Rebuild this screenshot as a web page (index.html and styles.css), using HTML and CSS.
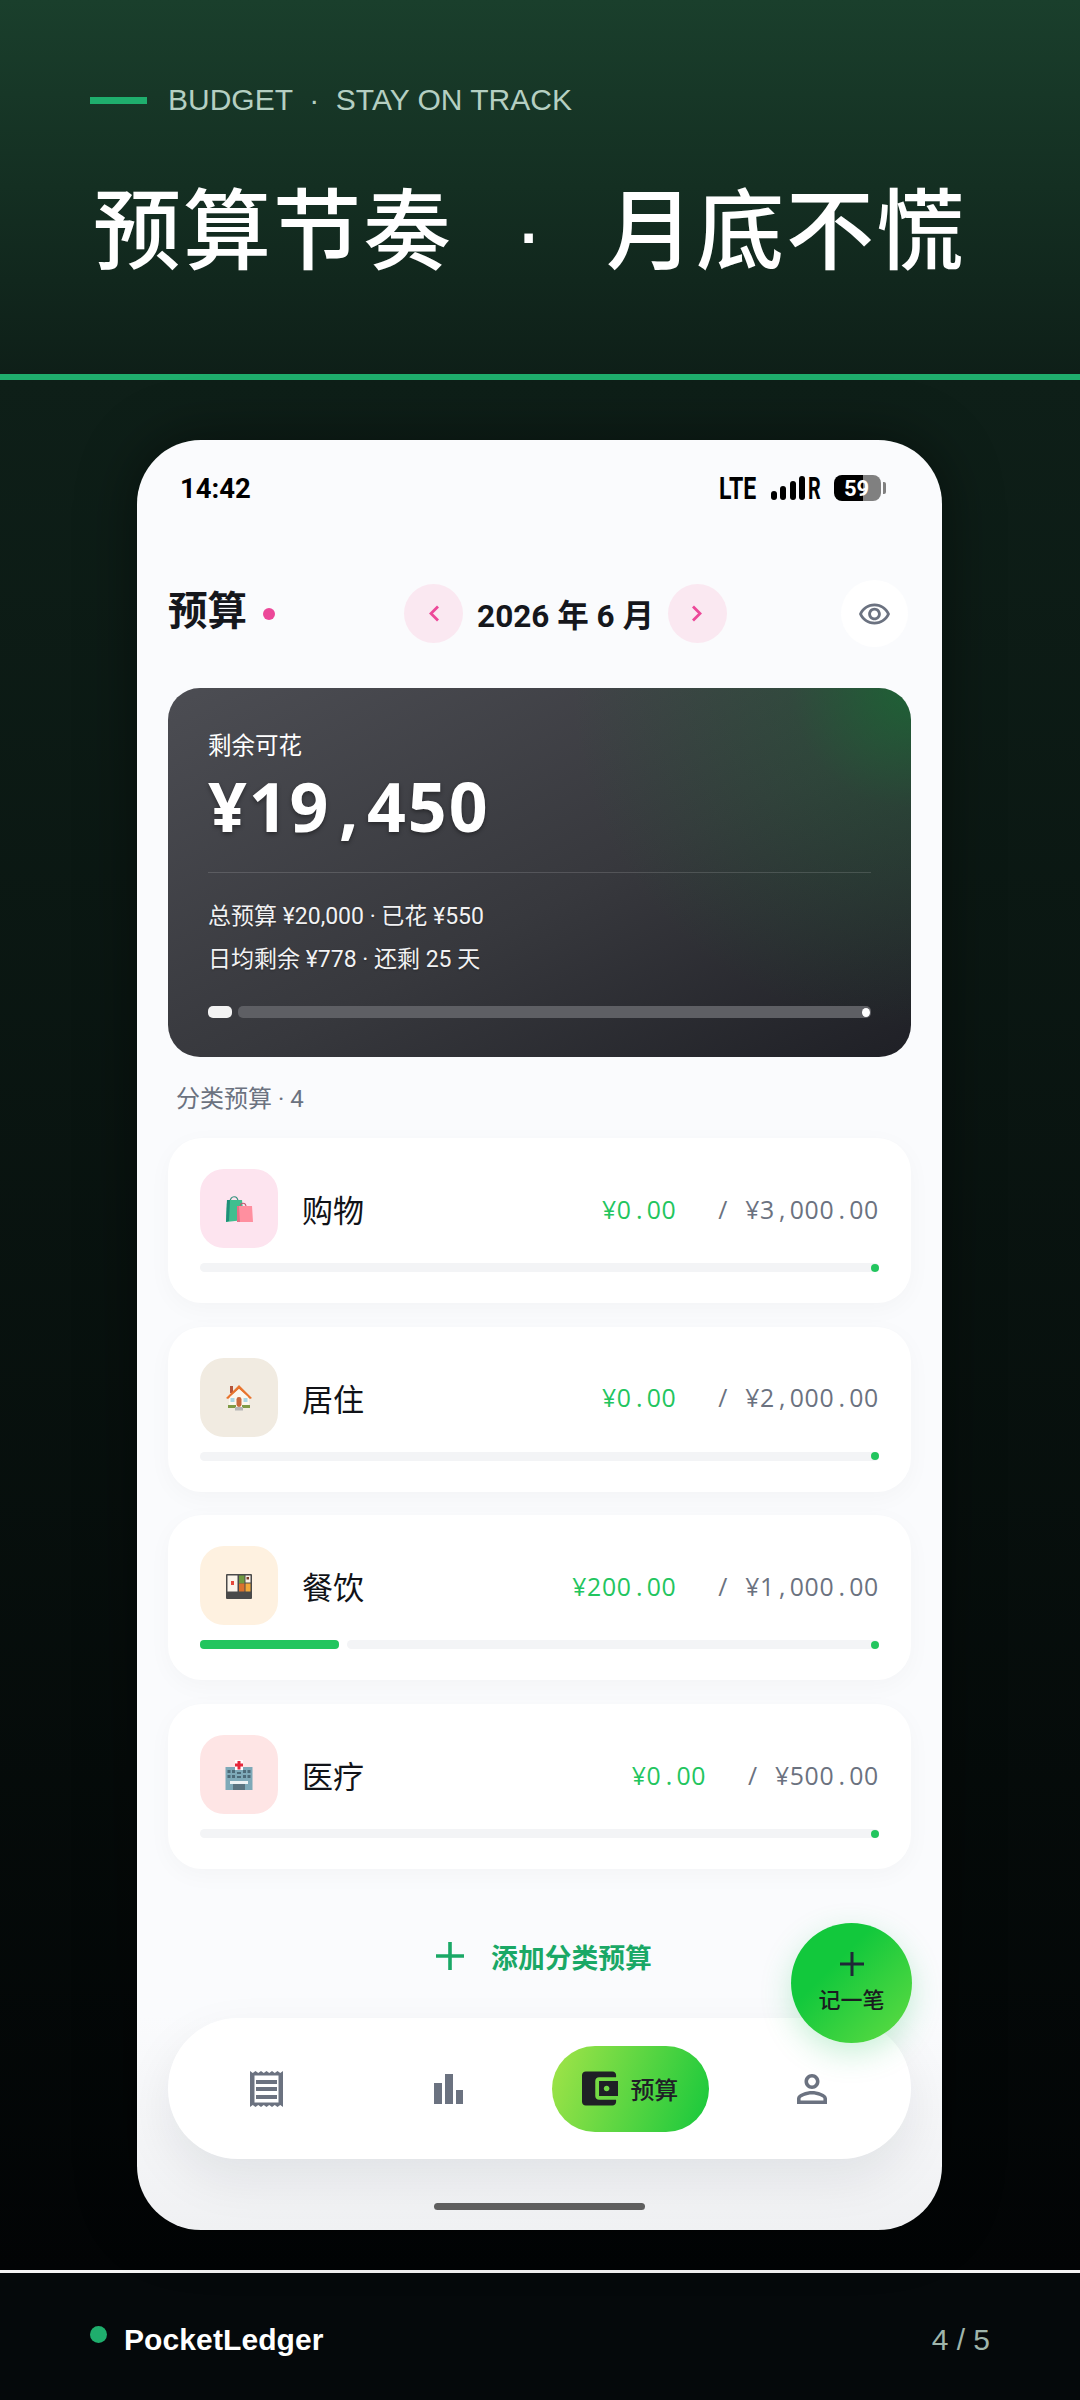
FILE: index.html
```html
<!DOCTYPE html>
<html lang="zh">

<head>
    <meta charset="utf-8">
    <title>PocketLedger</title>
    <link rel="stylesheet" href="styles.css">
</head>

<body>
    <!-- slide header -->
    <header class="banner">
        <div class="kicker"><span class="kicker-bar"></span><span>BUDGET &nbsp;·&nbsp; STAY ON TRACK</span></div>
        <h1 class="headline">预算节奏 &nbsp;·&nbsp; 月底不慌</h1>
    </header>

    <main class="stage">
        <div class="phone">
            <div class="status">
                <span class="clock">14:42</span>
                <div class="status-right">
                    <span class="lte">LTE</span>
                    <span class="signal"><i class="s1"></i><i class="s2"></i><i class="s3"></i><i class="s4"></i></span>
                    <span class="roam">R</span>
                    <span class="battery"><span class="battery-num">59</span></span>
                    <span class="battery-nub"></span>
                </div>
            </div>

            <div class="topbar">
                <div class="title-wrap"><span class="title">预算</span><span class="title-dot"></span></div>
                <div class="month-nav">
                    <span class="round-btn">
                        <svg width="12" height="17" viewBox="0 0 12 17"><polyline points="10,1.500 3,8.500 10,15.500" fill="none" stroke="#ec4899" stroke-width="2.800"/></svg>
                    </span>
                    <span class="month">2026 年 6 月</span>
                    <span class="round-btn">
                        <svg width="12" height="17" viewBox="0 0 12 17"><polyline points="2,1.500 9,8.500 2,15.500" fill="none" stroke="#ec4899" stroke-width="2.800"/></svg>
                    </span>
                </div>
                <span class="eye-btn">
                    <svg width="31" height="22" viewBox="1 4 22 15"><path fill="#6b7280" d="M12 6c3.79 0 7.17 2.13 8.82 5.5C19.17 14.87 15.79 17 12 17s-7.17-2.13-8.82-5.5C4.83 8.13 8.21 6 12 6m0-2C7 4 2.73 7.11 1 11.5 2.73 15.89 7 19 12 19s9.27-3.11 11-7.5C21.27 7.11 17 4 12 4zm0 5c1.38 0 2.5 1.12 2.5 2.5S13.38 14 12 14s-2.5-1.12-2.5-2.5S10.62 9 12 9m0-2c-2.48 0-4.5 2.02-4.5 4.5S9.52 16 12 16s4.5-2.02 4.5-4.5S14.48 7 12 7z"/></svg>
                </span>
            </div>

            <!-- summary card -->
            <section class="hero">
                <div class="hero-label">剩余可花</div>
                <div class="hero-amount mono">¥19<span class="p">,</span>450</div>
                <div class="hero-rule"></div>
                <div class="hero-line">总预算 ¥20,000 · 已花 ¥550</div>
                <div class="hero-line">日均剩余 ¥778 · 还剩 25 天</div>
                <div class="hero-bar">
                    <span class="hero-fill"></span>
                    <span class="hero-track"><i></i></span>
                </div>
            </section>

            <div class="section-label">分类预算 · 4</div>

            <div class="cat-list">
                <div class="cat">
                    <div class="cat-top">
                        <span class="cat-icon bg-pink">
                            <svg width="28" height="28" viewBox="0 0 28 28">
                                <path d="M5 7c0-7 8-7 8 0" fill="none" stroke="#2f8f7a" stroke-width="1.200"/>
                                <path d="M2 5h15l2 20-18 2z" fill="#3fbf8f"/>
                                <path d="M2 5h3l-1 21-3 1z" fill="#1f8f78"/>
                                <path d="M15 12c0-5 6-5 6 0" fill="none" stroke="#c2566f" stroke-width="1.200"/>
                                <path d="M12 11h15l1 16H12z" fill="#ff8f9f"/>
                                <path d="M12 11h2l1 16h-3z" fill="#e66f85"/>
                            </svg>
                        </span>
                        <span class="cat-name">购物</span>
                        <span class="spent mono">¥0<span class="p">.</span>00</span>
                        <span class="limit mono"><span class="p">/</span><span class="p"> </span>¥3<span class="p">,</span>000<span class="p">.</span>00</span>
                    </div>
                    <div class="cat-bar"><span class="cat-track"><i></i></span></div>
                </div>

                <div class="cat">
                    <div class="cat-top">
                        <span class="cat-icon bg-sand">
                            <svg width="28" height="28" viewBox="0 0 28 28">
                                <rect x="5" y="3" width="3" height="7" fill="#b5553a"/>
                                <rect x="4" y="12" width="20" height="12" fill="#fbf7ee"/>
                                <path d="M14 2 1 15l2 1L14 6l11 10 2-1z" fill="#e8742e"/>
                                <path d="M14 6 5 14v3h18v-3z" fill="#fbf7ee"/>
                                <rect x="11.500" y="14" width="5" height="10" rx="2.400" fill="#c9683c"/>
                                <rect x="5.500" y="15" width="4" height="4" fill="#a9d6e5"/>
                                <rect x="18.500" y="15" width="4" height="4" fill="#a9d6e5"/>
                                <rect x="3" y="22" width="8" height="3" fill="#7f9a45"/>
                                <rect x="17" y="22" width="8" height="3" fill="#7f9a45"/>
                                <rect x="10" y="24" width="8" height="3.500" fill="#b5b5b5"/>
                            </svg>
                        </span>
                        <span class="cat-name">居住</span>
                        <span class="spent mono">¥0<span class="p">.</span>00</span>
                        <span class="limit mono"><span class="p">/</span><span class="p"> </span>¥2<span class="p">,</span>000<span class="p">.</span>00</span>
                    </div>
                    <div class="cat-bar"><span class="cat-track"><i></i></span></div>
                </div>

                <div class="cat">
                    <div class="cat-top">
                        <span class="cat-icon bg-peach">
                            <svg width="28" height="28" viewBox="0 0 28 28">
                                <rect x="1" y="2" width="26" height="25" rx="1" fill="#4a4a4a"/>
                                <rect x="2.500" y="3.500" width="10" height="16" fill="#fbf4ea"/>
                                <rect x="6" y="9" width="3" height="4" fill="#e5483b"/>
                                <rect x="14" y="3.500" width="5.500" height="8" fill="#6f9a3f"/>
                                <rect x="14" y="11.500" width="5.500" height="8" fill="#d9722e"/>
                                <rect x="20.500" y="3.500" width="5" height="7" fill="#fbf4ea"/>
                                <rect x="21.500" y="5" width="2.500" height="2.500" fill="#7a3b2a"/>
                                <rect x="20.500" y="11.500" width="5" height="8" fill="#f2a93b"/>
                            </svg>
                        </span>
                        <span class="cat-name">餐饮</span>
                        <span class="spent mono">¥200<span class="p">.</span>00</span>
                        <span class="limit mono"><span class="p">/</span><span class="p"> </span>¥1<span class="p">,</span>000<span class="p">.</span>00</span>
                    </div>
                    <div class="cat-bar"><span class="cat-fill"></span><span class="cat-track"><i></i></span></div>
                </div>

                <div class="cat">
                    <div class="cat-top">
                        <span class="cat-icon bg-rose">
                            <svg width="28" height="30" viewBox="0 0 28 30">
                                <rect x="0.500" y="7" width="27" height="23" fill="#7ea9b8"/>
                                <rect x="10" y="0" width="8" height="10" fill="#fff"/>
                                <path d="M12.500 1h3v2.500h2.500v3h-2.500v3h-3v-3H10v-3h2.500z" fill="#e5283c"/>
                                <g fill="#4c6a78">
                                    <rect x="2.500" y="10" width="3" height="3"/><rect x="7" y="10" width="3" height="3"/><rect x="18" y="10" width="3" height="3"/><rect x="22.500" y="10" width="3" height="3"/>
                                    <rect x="2.500" y="15" width="3" height="3"/><rect x="7" y="15" width="3" height="3"/><rect x="18" y="15" width="3" height="3"/><rect x="22.500" y="15" width="3" height="3"/>
                                    <rect x="12" y="12" width="4" height="2"/><rect x="12" y="16" width="4" height="2"/>
                                </g>
                                <rect x="5" y="21" width="18" height="3" fill="#eef3f5"/>
                                <rect x="8" y="24" width="12" height="6" fill="#5b7480"/>
                            </svg>
                        </span>
                        <span class="cat-name">医疗</span>
                        <span class="spent mono">¥0<span class="p">.</span>00</span>
                        <span class="limit mono"><span class="p">/</span><span class="p"> </span>¥500<span class="p">.</span>00</span>
                    </div>
                    <div class="cat-bar"><span class="cat-track"><i></i></span></div>
                </div>
            </div>

            <div class="add-row">
                <svg width="28" height="28" viewBox="0 0 28 28"><path d="M14 0v28M0 14h28" stroke="#1aa866" stroke-width="3.600"/></svg>
                <span>添加分类预算</span>
            </div>

            <nav class="tabbar">
                <span class="tab">
                    <svg width="33" height="36" viewBox="0 0 33 36">
                        <path fill="#6b7280" d="M0 0l2.750 2 2.750-2 2.750 2 2.750-2 2.750 2 2.750-2 2.750 2 2.750-2 2.750 2 2.750-2 2.750 2 2.750-2v36l-2.750-2-2.750 2-2.750-2-2.750 2-2.750-2-2.750 2-2.750-2-2.750 2-2.750-2-2.750 2-2.750-2L0 36z"/>
                        <rect x="4.500" y="4.500" width="24" height="27" fill="#fff"/>
                        <path fill="#6b7280" d="M6 9h21v4H6zM6 16h21v4H6zM6 24h21v4H6z"/>
                    </svg>
                </span>
                <span class="tab">
                    <svg width="29" height="30" viewBox="0 0 29 30"><path fill="#6b7280" d="M0 9h8v21H0zM11 0h8v30h-8zM22 16h7v14h-7z"/></svg>
                </span>
                <span class="tab">
                    <span class="tab-active">
                        <svg width="36" height="35" viewBox="3 3 19 18"><path fill="#1f2026" d="M21 18v1c0 1.100-.9 2-2 2H5c-1.110 0-2-.9-2-2V5c0-1.100.89-2 2-2h14c1.100 0 2 .9 2 2v1h-9c-1.110 0-2 .9-2 2v8c0 1.100.89 2 2 2h9zm-9-2h10V8H12v8zm4-2.500c-.83 0-1.500-.67-1.500-1.500s.67-1.500 1.500-1.500 1.500.67 1.500 1.500-.67 1.500-1.500 1.500z"/></svg>
                        <span>预算</span>
                    </span>
                </span>
                <span class="tab">
                    <svg width="30" height="30" viewBox="4 4 16 16"><path fill="#6b7280" d="M12 5.900c1.160 0 2.100.94 2.100 2.100s-.94 2.100-2.100 2.100S9.900 9.160 9.900 8s.94-2.100 2.100-2.100m0 9c2.970 0 6.100 1.460 6.100 2.100v1.100H5.900V17c0-.64 3.130-2.100 6.100-2.100M12 4C9.790 4 8 5.790 8 8s1.790 4 4 4 4-1.790 4-4-1.790-4-4-4zm0 9c-2.670 0-8 1.340-8 4v3h16v-3c0-2.660-5.330-4-8-4z"/></svg>
                </span>
            </nav>

            <div class="home-bar"></div>

            <!-- floating add button -->
            <div class="fab">
                <svg width="24" height="24" viewBox="0 0 24 24"><path d="M12 0v24M0 12h24" stroke="#1f2937" stroke-width="3"/></svg>
                <span>记一笔</span>
            </div>
        </div>
    </main>

    <footer class="slide-foot">
        <div class="brand"><span class="brand-dot"></span><span>PocketLedger</span></div>
        <span class="pager">4 / 5</span>
    </footer>
</body>

</html>
```

FILE: styles.css
```css
* {
    box-sizing: border-box;
}

body {
    margin: 0;
    width: 1080px;
    height: 2400px;
    display: flex;
    flex-direction: column;
    overflow: hidden;
    font-family: "Roboto", "Noto Sans CJK SC", sans-serif;
    background: #05090b;
}

/* banner */
.banner {
    height: 380px;
    padding: 82px 90px 0;
    background: linear-gradient(180deg, #1a3f2c, #0e1f18);
    border-bottom: 6px solid #1fae6d;
}

.kicker {
    display: flex;
    align-items: center;
    gap: 21px;
    height: 36px;
    font-family: "Liberation Sans", sans-serif;
    font-size: 30px;
    color: #b5cfc2;
}

.kicker-bar {
    width: 57px;
    height: 7px;
    background: #1fae6d;
}

.headline {
    margin: 59px 0 0 3px;
    font-family: "Liberation Sans", "Noto Sans CJK SC", sans-serif;
    font-size: 88px;
    line-height: 110px;
    font-weight: 500;
    letter-spacing: 2px;
    word-spacing: 4px;
    white-space: pre;
    color: #fff;
}

/* phone */
.stage {
    flex: 1;
    padding: 60px 1px 0 0;
    display: flex;
    justify-content: center;
    align-items: flex-start;
    background: linear-gradient(180deg, #0e1f18, #020405);
}

.phone {
    position: relative;
    width: 805px;
    height: 1790px;
    padding: 0 31px;
    border-radius: 64px;
    background: linear-gradient(180deg, #fafbfd 88%, #f0f1f3 100%);
    box-shadow: 0 0 60px rgba(0, 0, 0, 0.45);
}

.status {
    height: 96px;
    padding: 0 25px 0 12px;
    display: flex;
    align-items: center;
    justify-content: space-between;
    color: #000;
}

.clock {
    font-size: 27.500px;
    font-weight: 700;
}

.status-right {
    display: flex;
    align-items: center;
    height: 30px;
}

.lte,
.roam {
    display: inline-block;
    font-size: 32px;
    line-height: 30px;
    font-weight: 700;
    transform-origin: left center;
    transform: scaleX(0.72);
}

.lte {
    width: 52px;
}

.roam {
    width: 14px;
    margin-left: 3px;
    transform: scaleX(0.62);
}

.signal {
    display: flex;
    align-items: flex-end;
    gap: 3.500px;
    height: 24px;
}

.signal i {
    width: 6px;
    border-radius: 3px;
    background: #000;
}

.s1 { height: 9px; }
.s2 { height: 14px; }
.s3 { height: 19px; }
.s4 { height: 24px; }

.battery {
    width: 47px;
    height: 26px;
    margin-left: 12px;
    display: flex;
    align-items: center;
    justify-content: center;
    border-radius: 8px;
    background: linear-gradient(90deg, #000 62%, #808080 62%);
    color: #fff;
}

.battery-num {
    font-size: 22px;
    font-weight: 700;
    margin-right: 2px;
}

.battery-nub {
    width: 3px;
    height: 12px;
    margin-left: 2px;
    border-radius: 0 2px 2px 0;
    background: #808080;
}

.topbar {
    margin-top: 44px;
    height: 67px;
    padding-right: 3px;
    display: flex;
    align-items: center;
    justify-content: space-between;
}

.title-wrap {
    width: 122px;
    display: flex;
    align-items: center;
    gap: 16px;
}

.title {
    font-size: 39.500px;
    line-height: 62px;
    padding-bottom: 4px;
    font-weight: 700;
    color: #15171c;
}

.title-dot {
    width: 12px;
    height: 12px;
    border-radius: 50%;
    background: #ec4899;
}

.month-nav {
    display: flex;
    align-items: center;
    gap: 14px;
}

.round-btn {
    width: 59px;
    height: 59px;
    display: flex;
    align-items: center;
    justify-content: center;
    border-radius: 50%;
    background: #fae8f1;
}

.month {
    font-size: 31.500px;
    padding-bottom: 2px;
    font-weight: 700;
    color: #15171c;
}

.eye-btn {
    width: 67px;
    height: 67px;
    display: flex;
    align-items: center;
    justify-content: center;
    border-radius: 50%;
    background: #fff;
}

/* hero card */
.hero {
    margin-top: 41px;
    height: 369px;
    padding: 41px 40px 0;
    border-radius: 32px;
    color: #fff;
    background:
        radial-gradient(circle at 100% 0, rgba(21, 110, 50, 0.75), rgba(21, 110, 50, 0.25) 120px, rgba(21, 110, 50, 0) 340px),
        linear-gradient(to bottom right, #4c4d53, #37383d 55%, #1f2026);
}

.hero-label {
    font-size: 23.500px;
    line-height: 34px;
}

.hero-amount {
    margin-top: 1px;
    font-size: 68px;
    line-height: 84px;
    font-weight: 700;
    letter-spacing: -2.600px;
    text-shadow: 0 2px 4px rgba(0, 0, 0, 0.4);
}

.hero-amount .p {
    width: 0.54em;
}

.hero-rule {
    height: 1px;
    margin: 24px 0 22px;
    background: rgba(255, 255, 255, 0.14);
}

.hero-line {
    font-size: 23px;
    line-height: 43px;
    color: #f2f2f3;
    text-shadow: 0 1px 2px rgba(0, 0, 0, 0.3);
}

.hero-bar {
    margin-top: 25px;
    display: flex;
    gap: 6px;
    height: 12px;
}

.hero-fill {
    width: 24px;
    border-radius: 5px;
    background: #f3f3f3;
}

.hero-track {
    flex: 1;
    display: flex;
    justify-content: flex-end;
    align-items: center;
    padding-right: 1px;
    border-radius: 5px;
    background: #5e5f64;
}

.hero-track i {
    width: 8px;
    height: 9px;
    border-radius: 50%;
    background: #fff;
}

.section-label {
    margin-top: 25px;
    padding-left: 8px;
    height: 34px;
    font-size: 24px;
    line-height: 34px;
    color: #6b7280;
}

/* category rows */
.cat-list {
    margin-top: 22px;
    display: flex;
    flex-direction: column;
    gap: 23.700px;
}

.cat {
    height: 165px;
    padding: 31px 32px;
    border-radius: 34px;
    background: #fff;
    box-shadow: 0 6px 24px rgba(17, 24, 39, 0.03);
}

.cat-top {
    display: flex;
    align-items: center;
    height: 79px;
}

.cat-icon {
    width: 78px;
    height: 79px;
    display: flex;
    align-items: center;
    justify-content: center;
    border-radius: 24px;
}

.bg-pink { background: #fde4ef; }
.bg-sand { background: #f1ebe1; }
.bg-peach { background: #fef1e0; }
.bg-rose { background: #fee5e5; }

.cat-name {
    margin-left: 24px;
    margin-right: auto;
    font-size: 31px;
    color: #111318;
}

.mono {
    font-family: "Open Sans", "Noto Sans CJK SC", sans-serif;
    letter-spacing: 0.028em;
    white-space: pre;
}

.p {
    display: inline-block;
    width: 0.6em;
    letter-spacing: 0;
    text-align: center;
}

.spent,
.limit {
    font-size: 24.800px;
}

.spent {
    color: #22c55e;
}

.limit {
    margin-left: 39px;
    color: #6b7280;
}

.cat-bar {
    margin-top: 15px;
    height: 9px;
    display: flex;
    gap: 8px;
}

.cat-fill {
    width: 139px;
    border-radius: 4px;
    background: #22c55e;
}

.cat-track {
    flex: 1;
    display: flex;
    justify-content: flex-end;
    align-items: center;
    border-radius: 5px;
    background: #f3f4f6;
}

.cat-track i {
    width: 8px;
    height: 8px;
    border-radius: 50%;
    background: #22c55e;
}

.add-row {
    margin-top: 57px;
    height: 60px;
    display: flex;
    align-items: center;
    justify-content: center;
    gap: 27px;
    padding-left: 9px;
    font-size: 26.800px;
    font-weight: 700;
    color: #1aa866;
}

/* bottom nav */
.tabbar {
    margin-top: 32px;
    height: 141px;
    padding: 0 8px;
    display: flex;
    align-items: center;
    border-radius: 70px;
    background: #fff;
    box-shadow: 0 20px 50px rgba(17, 24, 39, 0.08);
}

.tab {
    flex: 1;
    display: flex;
    justify-content: center;
}

.tab-active {
    width: 157px;
    height: 86px;
    display: flex;
    align-items: center;
    justify-content: center;
    gap: 12px;
    border-radius: 43px;
    background: linear-gradient(110deg, #a3e448, #16c83c);
    font-size: 24px;
    font-weight: 500;
    color: #1f2026;
}

.home-bar {
    width: 211px;
    height: 7px;
    margin: 44px auto 0;
    border-radius: 4px;
    background: #5f5f5f;
}

.fab {
    position: absolute;
    right: 30px;
    bottom: 187px;
    width: 121px;
    height: 120px;
    padding-top: 29px;
    display: flex;
    flex-direction: column;
    align-items: center;
    gap: 6px;
    border-radius: 50%;
    background: linear-gradient(135deg, #12c83c 35%, #62dc42);
    box-shadow: 0 10px 30px rgba(34, 197, 94, 0.25);
    font-size: 22px;
    font-weight: 500;
    color: #1a1c20;
}

/* footer */
.slide-foot {
    height: 130px;
    padding: 6px 90px 0;
    display: flex;
    align-items: center;
    justify-content: space-between;
    border-top: 3px solid #f5f5f5;
    background: #05090b;
}

.brand {
    display: flex;
    align-items: center;
    gap: 17px;
    font-family: "Liberation Sans", sans-serif;
    font-size: 30px;
    font-weight: 700;
    letter-spacing: 0.1px;
    color: #fff;
}

.brand-dot {
    width: 17px;
    height: 17px;
    margin-top: -10px;
    border-radius: 50%;
    background: #1fae6d;
}

.pager {
    font-family: "Liberation Sans", sans-serif;
    font-size: 30px;
    color: #9fb5ab;
}
```
